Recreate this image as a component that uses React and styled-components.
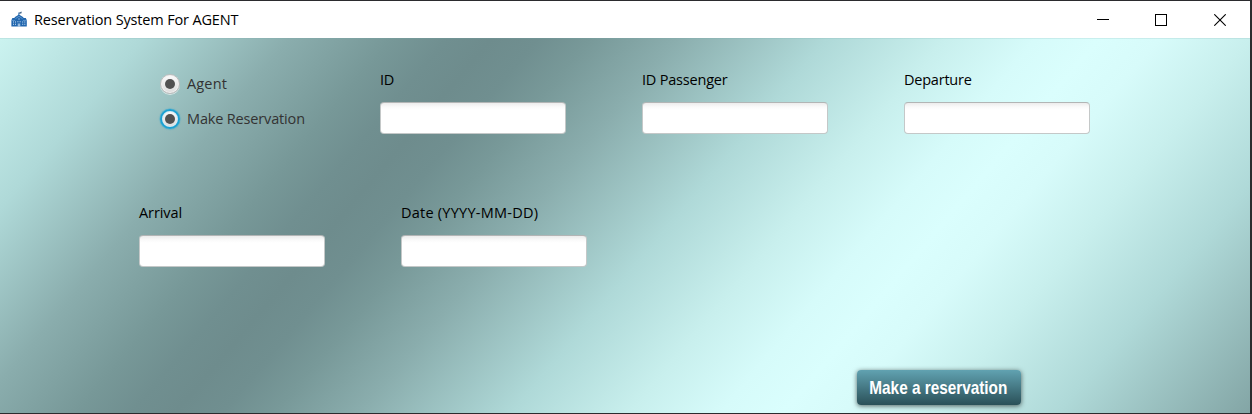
import React from "react";
import styled, { createGlobalStyle } from "styled-components";

const GlobalStyle = createGlobalStyle`
  * { box-sizing: border-box; }
  body { margin: 0; background: #2b2b2e; overflow: hidden; }
`;

const Desktop = styled.div`
  width: 1252px;
  height: 414px;
  padding: 1px 2px 1px 0;
  background: #2b2b2e;
  font-family: "Open Sans", "Noto Sans", sans-serif;
  font-size: 14.5px;
`;

const AppWindow = styled.div`
  display: flex;
  flex-direction: column;
  width: 1250px;
  height: 412px;
`;

const TitleBar = styled.header`
  display: flex;
  align-items: center;
  flex: none;
  height: 37px;
  padding-left: 11px;
  background: #fff;
`;

const Title = styled.h1`
  flex: 1;
  margin: 0 0 0 7px;
  font-size: 14.5px;
  font-weight: 400;
  line-height: 20px;
  letter-spacing: -0.16px;
  color: #000;
`;

const WindowControl = styled.button`
  display: flex;
  align-items: center;
  justify-content: center;
  width: ${(p) => p.$width || 58}px;
  height: 37px;
  padding: 0;
  border: 0;
  background: none;
`;

const Controls = styled.div`
  display: flex;
`;

const Content = styled.main`
  display: flex;
  flex-direction: column;
  flex: 1;
  padding-top: 1px;
  box-shadow: inset 0 1px 0 rgba(120, 170, 170, 0.18);
  background: linear-gradient(
    130.2deg,
    #cbf3f0 0px,
    #afd9d8 110px,
    #8aadad 222px,
    #779898 300px,
    #708f90 342px,
    #6e8c8d 376px,
    #708f90 412px,
    #789999 452px,
    #8aadad 516px,
    #afd9d8 632px,
    #c8efed 722px,
    #d6fbfa 792px,
    #dafefd 840px,
    #d7fbfa 886px,
    #c8efed 956px,
    #afd9d8 1050px,
    #82a4a4 1200px
  );
`;

const FieldRow = styled.div`
  display: flex;
  gap: 76px;
  height: ${(p) => p.$height}px;
  padding-left: ${(p) => p.$indent}px;
  padding-top: ${(p) => p.$top}px;
`;

const RadioGroup = styled.div`
  display: flex;
  flex-direction: column;
  gap: 13px;
  width: 144px;
  margin-top: 3px;
`;

const RadioLabel = styled.label`
  display: flex;
  align-items: center;
  gap: 7px;
  height: 22px;
  color: #333;
  white-space: nowrap;
  letter-spacing: ${(p) => p.$tracking}px;
`;

const RadioText = styled.span`
  line-height: 20px;
`;

const RadioDot = styled.span`
  display: flex;
  flex: none;
  align-items: center;
  justify-content: center;
  width: 20px;
  height: 20px;
  border-radius: 50%;
  border: ${(p) => (p.$focused ? "2px solid #1ba1d3" : "1px solid #bdbdbd")};
  background: linear-gradient(#fbfbfb, #dcdcdc);
  box-shadow: ${(p) =>
    p.$focused
      ? "0 0 1px 0.5px rgba(27, 161, 211, 0.6), inset 0 0 0 1px #d4eaf3"
      : "0 1px 0 rgba(255, 255, 255, 0.6), inset 0 0 0 1px #f0f0f0"};

  &::after {
    content: "";
    width: 10px;
    height: 10px;
    border-radius: 50%;
    background: #515151;
  }
`;

const Field = styled.label`
  display: flex;
  flex-direction: column;
  gap: 12px;
  width: 186px;
  color: #000;
  line-height: 20px;
  white-space: nowrap;
`;

const FieldName = styled.span`
  letter-spacing: ${(p) => p.$tracking}px;
`;

const TextInput = styled.input`
  width: 186px;
  height: 32px;
  padding: 4px 8px;
  border: 1px solid #c4c8c8;
  border-top-color: #b2b5b5;
  border-radius: 4px;
  background: linear-gradient(#ececec 0, #fafafa 4px, #fff 7px);
  font: inherit;
  outline: none;
`;

const Footer = styled.footer`
  display: flex;
  justify-content: flex-end;
  margin-top: auto;
  padding: 0 229px 8px 0;
`;

const SubmitButton = styled.button`
  display: flex;
  align-items: center;
  justify-content: center;
  width: 164px;
  height: 35px;
  padding: 1px 2px 0 0;
  border: 0;
  border-radius: 4px;
  background: linear-gradient(#61a2b1, #2a5058);
  box-shadow: 0 1px 5px rgba(0, 0, 0, 0.6);
  color: #fff;
  font: bold 18.5px "Liberation Sans", sans-serif;
  white-space: nowrap;
`;

const Condensed = styled.span`
  transform: scaleX(0.828);
`;

function BuildingIcon() {
  return (
    <svg width="16" height="18" viewBox="0 0 16 18" fill="#2166ae">
      <path d="M7.4 1.5h.9V5h-.9z" />
      <path d="M8.2 1.6 10.6.6v1.6l-2.4.9z" fill="#46688c" />
      <path d="M8 3.4 12.4 6.2V7h2.4l1 2.3V15.5H.4V9.3l1-2.3h2.2v-.8z" />
      <path d="M.5 9.4h3.6M11.9 9.4h3.8M4.4 7.7 8 5.3l3.6 2.4" stroke="#75a8d8" strokeWidth=".7" fill="none" />
      <path
        d="M2 10.6h1v1H2zM4 10.6h1v1H4zM2 12.7h1v1H2zM4 12.7h1v1H4zM11.2 10.6h1v1h-1zM13.3 10.6h1v1h-1zM11.2 12.7h1v1h-1zM13.3 12.7h1v1h-1zM7.4 7.4h1.2v1.2H7.4zM6.4 10.2h1v1h-1zM8.6 10.2h1v1h-1zM6.8 12.5h.9v3h-.9zM8.3 12.5h.9v3h-.9z"
        fill="#cfe2f4"
      />
    </svg>
  );
}

function TextField({ name, tracking }) {
  return (
    <Field>
      <FieldName $tracking={tracking}>{name}</FieldName>
      <TextInput type="text" />
    </Field>
  );
}

function Radio({ label, focused, tracking }) {
  return (
    <RadioLabel $tracking={tracking}>
      <RadioDot $focused={focused} />
      <RadioText>{label}</RadioText>
    </RadioLabel>
  );
}

export default function App() {
  return (
    <Desktop>
      <GlobalStyle />
      <AppWindow>
        <TitleBar>
          <BuildingIcon />
          <Title>Reservation System For AGENT</Title>
          <Controls>
            <WindowControl aria-label="Minimize">
              <svg width="12" height="12" shapeRendering="crispEdges">
                <path d="M0 5h12v1H0z" />
              </svg>
            </WindowControl>
            <WindowControl aria-label="Maximize">
              <svg width="12" height="12" shapeRendering="crispEdges">
                <rect x=".5" y=".5" width="11" height="11" fill="none" stroke="#000" />
              </svg>
            </WindowControl>
            <WindowControl aria-label="Close" $width={60}>
              <svg width="12" height="12">
                <path d="M.3.3l11.4 11.4M11.7.3.3 11.7" fill="none" stroke="#000" strokeWidth="1.1" />
              </svg>
            </WindowControl>
          </Controls>
        </TitleBar>
        <Content>
          <FieldRow $indent={160} $top={31} $height={164}>
            <RadioGroup>
              <Radio label="Agent" tracking={0.15} />
              <Radio label="Make Reservation" focused tracking={-0.16} />
            </RadioGroup>
            <TextField name="ID" tracking={-0.2} />
            <TextField name="ID Passenger" tracking={-0.2} />
            <TextField name="Departure" tracking={-0.22} />
          </FieldRow>
          <FieldRow $indent={139} $top={0} $height={70}>
            <TextField name="Arrival" tracking={-0.1} />
            <TextField name="Date (YYYY-MM-DD)" tracking={0.24} />
          </FieldRow>
          <Footer>
            <SubmitButton type="button">
              <Condensed>Make a reservation</Condensed>
            </SubmitButton>
          </Footer>
        </Content>
      </AppWindow>
    </Desktop>
  );
}
